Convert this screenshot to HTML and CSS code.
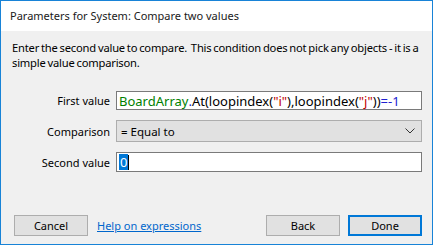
FILE: index.html
```html
<!DOCTYPE html>
<html lang="en">
<head>
  <meta charset="UTF-8">
  <title>Parameters for System: Compare two values</title>
  <link rel="stylesheet" href="styles.css">
</head>
<body>
  <!-- 对话框窗口 -->
  <div class="window">
    <div class="titlebar">Parameters for System: Compare two values</div>
    <div class="content">
      <p class="desc">Enter the second value to compare.&nbsp; This condition does not pick any objects - it is a simple value comparison.</p>

      <!-- 参数表单 -->
      <div class="fields">
        <label class="label">First value</label>
        <div class="input code"><span class="c-obj">BoardArray</span><span class="c-op">.</span>At(loopindex(<span class="c-str">"i"</span>),loopindex(<span class="c-str">"j"</span>))<span class="c-op">=-1</span></div>

        <label class="label">Comparison</label>
        <div class="select">
          <span>= Equal to</span>
          <svg class="chevron" width="10" height="6" viewBox="0 0 10 6"><polyline points="0.5,0.5 5,5 9.5,0.5" fill="none" stroke="#333" stroke-width="1"/></svg>
        </div>

        <label class="label">Second value</label>
        <div class="input code input-focus"><span class="sel">0</span><span class="caret"></span></div>
      </div>

      <!-- 底部按钮 -->
      <div class="buttons">
        <button class="btn">Cancel</button>
        <a class="help" href="javascript:;">Help on expressions</a>
        <span class="spacer"></span>
        <button class="btn">Back</button>
        <button class="btn btn-default">Done</button>
      </div>
    </div>
  </div>
</body>
</html>
```

FILE: styles.css
```css
* {
  margin: 0;
  padding: 0;
  box-sizing: border-box;
}

body {
  font-family: "Noto Sans", "Open Sans", sans-serif;
  font-size: 11px;
  color: #000;
}

/*窗口*/
.window {
  width: 433px;
  height: 245px;
  border: 1px solid #1883d7;
  display: flex;
  flex-direction: column;
}

.titlebar {
  height: 30px;
  line-height: 30px;
  padding-left: 9px;
  background-color: #fff;
  color: #1a1a1a;
}

.content {
  flex: 1;
  background-color: #f0f0f0;
  padding: 9px 10px 8px 11px;
  display: flex;
  flex-direction: column;
}

.desc {
  line-height: 15px;
  font-size: 11.2px;
  letter-spacing: -0.2px;
  word-spacing: -0.8px;
}

/*表单*/
.fields {
  display: grid;
  grid-template-columns: 98px 1fr;
  column-gap: 6px;
  row-gap: 10px;
  margin-top: 21px;
  align-items: center;
}

.label {
  text-align: right;
  color: #000;
}

.input {
  height: 19px;
  border: 1px solid #7a7a7a;
  background-color: #fff;
  padding-left: 2px;
  white-space: nowrap;
  display: flex;
  align-items: center;
}

.code {
  font-size: 13px;
}

.c-obj { color: #008000; }
.c-op { color: #2020d0; }
.c-str { color: #c00000; }

.select {
  height: 22px;
  border: 1px solid #adadad;
  background-color: #e1e1e1;
  padding: 0 6px 0 4px;
  display: flex;
  align-items: center;
  justify-content: space-between;
  font-size: 11.5px;
}

.input-focus {
  height: 20px;
}

.sel {
  background-color: #0078d7;
  color: #fff;
  padding: 0 1px;
  line-height: 16px;
}

.caret {
  width: 1px;
  height: 15px;
  background-color: #000;
}

/*按钮*/
.buttons {
  margin-top: auto;
  display: flex;
  align-items: center;
  padding-left: 2px;
}

.btn {
  width: 74px;
  height: 21px;
  font: inherit;
  background-color: #e1e1e1;
  border: 1px solid #adadad;
  color: #000;
}

.btn-default {
  border: 2px solid #0078d7;
  margin-left: 8px;
}

.help {
  margin-left: 9px;
  color: #0066cc;
  text-decoration: underline;
}

.spacer {
  flex: 1;
}
```
